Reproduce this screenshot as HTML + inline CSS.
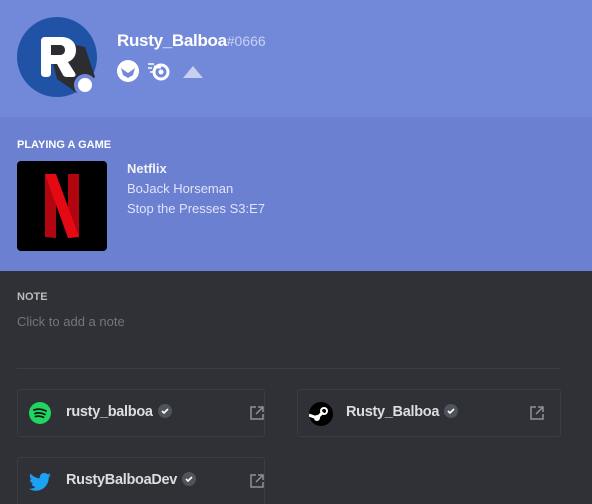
<!DOCTYPE html>
<html><head><meta charset="utf-8"><style>
*{margin:0;padding:0;box-sizing:border-box}
html,body{width:592px;height:504px;overflow:hidden}
body{background:#2f3136;font-family:"Liberation Sans",sans-serif;position:relative}
.hdr{position:absolute;left:0;top:0;width:592px;height:117px;background:#7289da}
.act{position:absolute;left:0;top:117px;width:592px;height:154px;background:#6b80d0}
.abs{position:absolute}
.acc{position:absolute;border:1px solid #3b3d42;border-radius:3px;height:48px}
.acc .n{position:absolute;left:48px;top:14px;color:#dcddde;font-size:14.5px;font-weight:bold;letter-spacing:-0.3px}
.chk{display:inline-block;vertical-align:-2px;margin-left:5px}
.ext{position:absolute;top:15px}
</style></head><body>
<div class="hdr"></div>
<div class="act"></div>
<svg class="abs" style="left:17px;top:17px" width="82" height="82" viewBox="0 0 82 82">
<circle cx="40" cy="40" r="40" fill="#2053a6"/>
<path d="M30 22 L68 30 L78 60 L60 76 L40 62Z" fill="#2b2d30"/>
<path d="M24 24q0-4 4-4h16c9 0 15 5 15 13 0 6-3 10-8 12l7 11q2 4-3 4h-5q-3 0-4-2l-6-11h-6v9q0 4-4 4h-2q-4 0-4-4z M34 28v10h9c3 0 5-2 5-5s-2-5-5-5z" fill="#fff"/>
<circle cx="68" cy="68" r="11" fill="#7289da"/>
<circle cx="68" cy="68" r="7" fill="#fff"/>
</svg>
<div class="abs" style="left:117px;top:31px;color:#fff;font-size:17px;font-weight:bold;letter-spacing:-0.3px">Rusty_Balboa<span style="font-weight:normal;color:rgba(255,255,255,.6);font-size:14px;letter-spacing:0">#0666</span></div>
<svg class="abs" style="left:117px;top:60px" width="100" height="24" viewBox="0 0 100 24">
<circle cx="11" cy="11" r="11" fill="#fff"/>
<path d="M4 8l7 5 7-5-2 7-5 3-5-3z" fill="#7289da"/>
<path d="M31 4h6M31 8h4M33 12h3" stroke="#fff" stroke-width="1.5"/>
<circle cx="44" cy="12" r="7" fill="none" stroke="#fff" stroke-width="3"/><circle cx="44" cy="12" r="2.5" fill="#fff"/>
<path d="M37 7h7" stroke="#fff" stroke-width="3"/>
<path d="M66 18l10-12 10 12z" fill="#c8d0f0"/>
</svg>
<div class="abs" style="left:17px;top:139px;color:#fff;font-size:11px;font-weight:bold">PLAYING A GAME</div>
<div class="abs" style="left:17px;top:161px;width:90px;height:90px;background:#000;border-radius:4px"></div>
<svg class="abs" style="left:17px;top:161px" width="90" height="90" viewBox="0 0 90 90">
<path d="M28 13h11v64l-11-1z" fill="#b1060f"/><path d="M51 13h11v63l-11 1z" fill="#b1060f"/>
<path d="M28 13h11l23 63-11 1z" fill="#e50914"/>
</svg>
<div class="abs" style="left:127px;top:161px;color:#fff;font-size:13px;font-weight:bold;opacity:.9">Netflix</div>
<div class="abs" style="left:127px;top:181px;color:#eef;font-size:13px;opacity:.9">BoJack Horseman</div>
<div class="abs" style="left:127px;top:201px;color:#eef;font-size:13px;opacity:.9">Stop the Presses S3:E7</div>
<div class="abs" style="left:17px;top:291px;color:#b9bbbe;font-size:11px;font-weight:bold">NOTE</div>
<div class="abs" style="left:17px;top:314px;color:#72767d;font-size:13px">Click to add a note</div>
<div class="abs" style="left:17px;top:368px;width:543px;height:1px;background:#3b3d42"></div>

<div class="acc" style="left:17px;top:389px;width:248px">
<svg class="abs" style="left:11px;top:12px" width="22" height="22" viewBox="0 0 22 22"><circle cx="11" cy="11" r="11" fill="#1ed760"/><path d="M5 8c4-1.5 8-1 12 1M6 11.5c3-1 7-.6 10 1M6.5 14.5c3-.8 5.5-.4 8 .8" stroke="#191414" stroke-width="1.8" fill="none" stroke-linecap="round"/></svg>
<div class="n">rusty_balboa<svg class="chk" width="14" height="14" viewBox="0 0 14 14"><circle cx="7" cy="7" r="7" fill="#4f545c"/><path d="M4 7l2 2 4-4" stroke="#fff" stroke-width="1.6" fill="none"/></svg></div>
<svg class="ext" style="left:231px" width="16" height="16" viewBox="0 0 16 16"><path d="M7 2H2v12h12V9M9 2h5v5M14 2l-7 7" stroke="#8e9297" stroke-width="1.5" fill="none"/></svg>
</div>
<div class="acc" style="left:297px;top:389px;width:264px">
<svg class="abs" style="left:11px;top:12px" width="24" height="24" viewBox="0 0 24 24"><circle cx="12" cy="12" r="12" fill="#000"/><circle cx="15" cy="9" r="4" fill="#fff"/><circle cx="15" cy="9" r="2" fill="#000"/><path d="M0 13l8 3 6-6" stroke="#fff" stroke-width="3" fill="none"/><circle cx="8" cy="16" r="3" fill="#fff"/></svg>
<div class="n">Rusty_Balboa<svg class="chk" width="14" height="14" viewBox="0 0 14 14"><circle cx="7" cy="7" r="7" fill="#4f545c"/><path d="M4 7l2 2 4-4" stroke="#fff" stroke-width="1.6" fill="none"/></svg></div>
<svg class="ext" style="left:231px" width="16" height="16" viewBox="0 0 16 16"><path d="M7 2H2v12h12V9M9 2h5v5M14 2l-7 7" stroke="#8e9297" stroke-width="1.5" fill="none"/></svg>
</div>
<div class="acc" style="left:17px;top:457px;width:248px;height:60px">
<svg class="abs" style="left:11px;top:14px" width="22" height="20" viewBox="0 0 24 20"><path d="M24 2.4c-.9.4-1.8.7-2.8.8 1-.6 1.8-1.600 2.2-2.700-1 .6-2 1-3.100 1.200C19.300.7 18 0 16.600 0c-2.700 0-4.900 2.200-4.900 4.900 0 .4 0 .8.1 1.100C7.700 5.800 4.100 3.900 1.700.9c-.4.7-.7 1.600-.7 2.500 0 1.700.9 3.200 2.200 4.100-.8 0-1.600-.2-2.200-.6v.1c0 2.400 1.700 4.400 3.900 4.800-.4.1-.8.2-1.300.2-.3 0-.6 0-.9-.1.6 2 2.400 3.400 4.600 3.400-1.700 1.300-3.800 2.100-6.100 2.100-.4 0-.8 0-1.200-.1 2.200 1.400 4.800 2.200 7.500 2.200 9.100 0 14-7.500 14-14v-.6c1-.7 1.800-1.600 2.500-2.500z" fill="#1da1f2"/></svg>
<div class="n">RustyBalboaDev<svg class="chk" width="14" height="14" viewBox="0 0 14 14"><circle cx="7" cy="7" r="7" fill="#4f545c"/><path d="M4 7l2 2 4-4" stroke="#fff" stroke-width="1.6" fill="none"/></svg></div>
<svg class="ext" style="left:231px" width="16" height="16" viewBox="0 0 16 16"><path d="M7 2H2v12h12V9M9 2h5v5M14 2l-7 7" stroke="#8e9297" stroke-width="1.5" fill="none"/></svg>
</div>
</body></html>
